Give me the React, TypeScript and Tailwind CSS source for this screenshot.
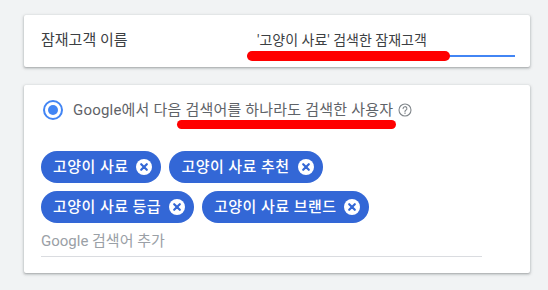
import React from "react";

const chips = [
  ["고양이 사료", "고양이 사료 추천"],
  ["고양이 사료 등급", "고양이 사료 브랜드"],
];

function CloseIcon() {
  return (
    <svg width="16" height="16" viewBox="0 0 16 16" className="shrink-0">
      <circle cx="8" cy="8" r="8" fill="#ffffff" />
      <path d="M5.2 5.2L10.8 10.8M10.8 5.2L5.2 10.8" stroke="#3367d6" strokeWidth="2.2" strokeLinecap="round" />
    </svg>
  );
}

function HelpIcon() {
  return (
    <svg width="14" height="14" viewBox="0 0 14 14" className="shrink-0">
      <circle cx="7" cy="7" r="6" fill="none" stroke="#80868b" strokeWidth="1.1" />
      <path d="M5.1 5.6a1.9 1.9 0 1 1 2.7 1.7c-.5.3-.8.6-.8 1.2v.3" fill="none" stroke="#80868b" strokeWidth="1.1" strokeLinecap="round" />
      <circle cx="7" cy="10.3" r="0.7" fill="#80868b" />
    </svg>
  );
}

export default function App() {
  return (
    <div
      className="w-[548px] h-[290px] bg-[#f1f3f4] pt-[15px] pl-6 overflow-hidden"
      style={{ fontFamily: "Roboto, 'Noto Sans CJK KR', sans-serif" }}
    >
      {/* name card */}
      <div className="w-[506px] h-[52px] bg-white rounded-[2px] shadow-[0_1px_2px_rgba(60,64,67,0.3),0_1px_3px_1px_rgba(60,64,67,0.15)] flex pl-[17px]">
        <div className="w-[206px] pt-[15px] text-[15px] leading-5 text-[#3c4043]">잠재고객 이름</div>
        <div className="relative w-[268px] pt-[15px]">
          <div className="pl-[10px] pb-[5px] text-sm leading-5 text-[#3c4043] border-b-2 border-[#4285f4]">
            '고양이 사료' 검색한 잠재고객
          </div>
          <div className="absolute left-0 top-[36px] w-[203px] h-[10px] rounded-full bg-[#ff0000]" />
        </div>
      </div>

      {/* keywords card */}
      <div className="mt-[18px] w-[506px] h-[188px] bg-white rounded-[2px] shadow-[0_1px_2px_rgba(60,64,67,0.3),0_1px_3px_1px_rgba(60,64,67,0.15)] pt-[15px] pl-[17px]">
        <div className="flex items-center h-5">
          <div className="ml-[2px] w-5 h-5 rounded-full border-2 border-[#4285f4] flex items-center justify-center">
            <div className="w-[10px] h-[10px] rounded-full bg-[#4285f4]" />
          </div>
          <div className="relative ml-[10px] text-[15px] leading-5 tracking-[0.2px] text-[#5f6368]">
            Google에서 다음 검색어를 하나라도 검색한 사용자
            <div className="absolute left-[104px] top-[20px] w-[219px] h-[9px] rounded-full bg-[#ff0000]" />
          </div>
          <div className="ml-[5px]">
            <HelpIcon />
          </div>
        </div>

        <div className="mt-[31px] flex flex-col gap-2">
          {chips.map((row, i) => (
            <div key={i} className="flex gap-2">
              {row.map((c) => (
                <div
                  key={c}
                  className="h-8 rounded-full bg-[#3367d6] flex items-center pl-3 pr-[9px] gap-2 text-[15px] tracking-[0.45px] font-medium text-white"
                >
                  <span>{c}</span>
                  <CloseIcon />
                </div>
              ))}
            </div>
          ))}
        </div>

        <div className="mt-2 w-[441px] pb-[5px] border-b border-[#dadce0] text-[15px] leading-5 text-[#9aa0a6]">
          Google 검색어 추가
        </div>
      </div>
    </div>
  );
}
